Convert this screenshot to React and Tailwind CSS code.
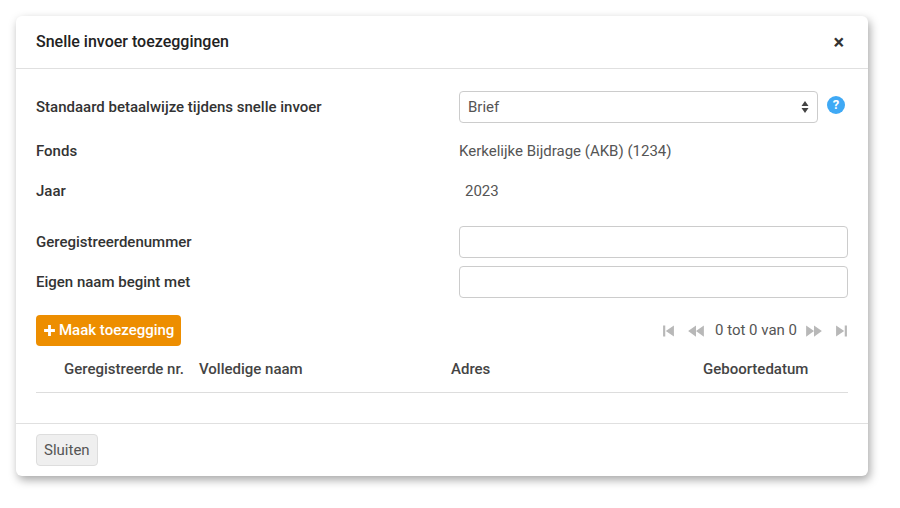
export default function App() {
  const Ico = ({ d }) => (
    <svg width="13" height="14" viewBox="0 0 12 12" fill="#b8b8b8"><path d={d} /></svg>
  );
  return (
    <div className="w-[900px] h-[508px] bg-white pt-4 pl-4" style={{ fontFamily: "Roboto, sans-serif" }}>
      <div className="w-[852px] h-[460px] bg-white rounded-md shadow-[2px_4px_10px_rgba(0,0,0,0.35)] flex flex-col text-[#333]">
        <div className="h-[53px] flex items-center justify-between px-5 border-b border-[#e0e0e0]">
          <span className="text-[16px] font-medium text-[#222]">Snelle invoer toezeggingen</span>
          <span className="text-[20px] font-bold text-[#333] leading-none mr-1">×</span>
        </div>
        <div className="flex-1 px-5 pt-[22px] text-[15px]">
          <div className="flex items-center h-[32px]">
            <div className="w-[423px] font-medium">Standaard betaalwijze tijdens snelle invoer</div>
            <div className="w-[359px] h-[32px] border border-[#ccc] rounded flex items-center justify-between px-2 text-[#555]">
              <span>Brief</span>
              <svg width="8" height="16" viewBox="0 0 8 14" fill="#444"><path d="M4 1 L7.5 6 H0.5Z M4 13 L7.5 8 H0.5Z" /></svg>
            </div>
            <div className="ml-[9px] w-[18px] h-[18px] rounded-full bg-[#3fa9f5] text-white text-[13px] font-bold flex items-center justify-center mb-[4px]">?</div>
          </div>
          <div className="flex items-center h-[24px] mt-[16px]">
            <div className="w-[423px] font-medium">Fonds</div>
            <div className="text-[#555]">Kerkelijke Bijdrage (AKB) (1234)</div>
          </div>
          <div className="flex items-center h-[24px] mt-[16px]">
            <div className="w-[429px] font-medium">Jaar</div>
            <div className="text-[#555]">2023</div>
          </div>
          <div className="flex items-center h-[32px] mt-[23px]">
            <div className="w-[423px] font-medium">Geregistreerdenummer</div>
            <div className="w-[389px] h-[32px] border border-[#ccc] rounded"></div>
          </div>
          <div className="flex items-center h-[32px] mt-[8px]">
            <div className="w-[423px] font-medium">Eigen naam begint met</div>
            <div className="w-[389px] h-[32px] border border-[#ccc] rounded"></div>
          </div>
          <div className="flex items-center justify-between mt-[17px] w-[812px]">
            <div className="h-[31px] bg-[#ed8e00] rounded text-white flex items-center px-[7px] gap-[3px] font-medium">
              <svg width="13" height="13" viewBox="0 0 12 12"><path d="M6 1V11M1 6H11" stroke="white" strokeWidth="2.6" /></svg>
              Maak toezegging
            </div>
            <div className="flex items-center gap-[8px] text-[#555] mr-0">
              <Ico d="M1 1h2v10H1z M11 1v10L3.5 6z" />
              <span className="ml-[4px] flex"><svg width="18" height="14" viewBox="0 0 16 12" fill="#b8b8b8"><path d="M8 1v10L1 6z M15 1v10L8 6z" /></svg></span>
              <span className="ml-[2px]">0 tot 0 van 0</span>
              <svg width="18" height="14" viewBox="0 0 16 12" fill="#b8b8b8"><path d="M1 1v10l7-5z M8 1v10l7-5z" /></svg>
              <span className="ml-[4px] flex"><Ico d="M1 1v10l7.5-5z M9 1h2v10H9z" /></span>
            </div>
          </div>
          <div className="flex h-[47px] items-center w-[812px] border-b border-[#ddd] text-[#444] font-medium">
            <div className="w-[163px] pl-[28px] whitespace-nowrap">Geregistreerde nr.</div>
            <div className="w-[252px]">Volledige naam</div>
            <div className="w-[252px]">Adres</div>
            <div>Geboortedatum</div>
          </div>
        </div>
        <div className="h-[53px] border-t border-[#e0e0e0] flex items-center px-5">
          <div className="h-[32px] px-[7px] bg-[#efefef] border border-[#ddd] rounded flex items-center text-[15px] text-[#555]">Sluiten</div>
        </div>
      </div>
    </div>
  );
}
